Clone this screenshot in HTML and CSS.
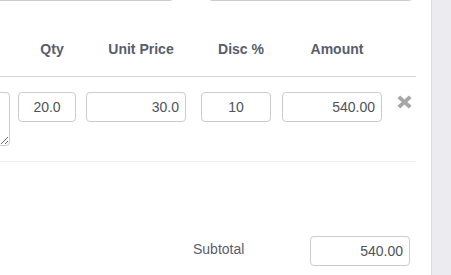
FILE: index.html
```html
<!DOCTYPE html>
<html lang="en">
<head>
    <meta charset="UTF-8">
    <title>Invoice Items</title>
    <link rel="stylesheet" href="styles.css">
</head>
<body>
    <div class="panel">
        <!-- Campos superiores (cortados) -->
        <div class="top-fields">
            <input type="text" class="field field-left">
            <input type="text" class="field field-right">
        </div>

        <!-- Cabecera de la tabla -->
        <div class="items-head">
            <div class="cell"></div>
            <div class="cell head">Qty</div>
            <div class="cell head">Unit Price</div>
            <div class="cell head">Disc %</div>
            <div class="cell head">Amount</div>
            <div class="cell"></div>
        </div>

        <!-- Fila de producto -->
        <div class="items-row">
            <div class="cell desc"><textarea class="desc-box"></textarea></div>
            <div class="cell"><input type="text" class="field num center qty" value="20.0"></div>
            <div class="cell"><input type="text" class="field num right price" value="30.0"></div>
            <div class="cell"><input type="text" class="field num center disc" value="10"></div>
            <div class="cell"><input type="text" class="field num right amount" value="540.00"></div>
            <div class="cell remove">
                <svg width="15" height="14" viewBox="0 0 15 14">
                    <path d="M0.5 3.2 L3.2 0.5 L7.5 4.6 L11.8 0.5 L14.5 3.2 L10.3 7 L14.5 10.8 L11.8 13.5 L7.5 9.4 L3.2 13.5 L0.5 10.8 L4.7 7 Z" fill="#a6a6a6"/>
                </svg>
            </div>
        </div>

        <!-- Totales -->
        <div class="totals">
            <span class="total-label">Subtotal</span>
            <input type="text" class="field num right total" value="540.00">
        </div>
    </div>
</body>
</html>
```
FILE: styles.css
```css
body {
    margin: 0;
    background-color: #ebebf0;
    font-family: 'Liberation Sans', Arial, sans-serif;
    font-size: 14px;
    overflow: hidden;
}
.panel {
    width: 431px;
    height: 275px;
    background-color: #fff;
    border-right: 1px solid #dcdce2;
    overflow: hidden;
}
.field {
    box-sizing: border-box;
    height: 30px;
    border: 1px solid #ccc;
    border-radius: 4px;
    padding: 0 6px;
    font-family: inherit;
    font-size: 14px;
    color: #505359;
    background: #fff;
    outline: none;
}
.top-fields {
    display: flex;
    height: 31px;
    margin-top: -30px;
}
.field-left {
    width: 200px;
    height: 31px;
    margin-left: -26px;
}
.field-right {
    width: 205px;
    height: 31px;
    margin-left: 34px;
}
.items-head,
.items-row {
    display: grid;
    grid-template-columns: 14px 66px 112px 88px 104px 32px;
    width: 416px;
}
.items-head {
    height: 75px;
    border-bottom: 1px solid #d4d4d4;
}
.head {
    padding-top: 38px;
    padding-left: 10px;
    line-height: 20px;
    font-weight: bold;
    color: #585d6d;
    text-align: center;
}
.items-row {
    padding: 15px 0;
    height: 54px;
    border-bottom: 1px solid #ececec;
}
.items-row .cell {
    display: flex;
    justify-content: center;
    align-items: flex-start;
}
.items-row .desc {
    justify-content: flex-end;
    padding-right: 4px;
}
.desc-box {
    box-sizing: border-box;
    flex: none;
    width: 150px;
    height: 54px;
    border: 1px solid #ccc;
    border-radius: 4px;
    resize: vertical;
    margin: 0;
}
.center { text-align: center; }
.right { text-align: right; }
.qty { width: 58px; }
.price { width: 100px; }
.disc { width: 70px; }
.amount { width: 100px; }
.items-row .remove {
    justify-content: flex-start;
    padding-left: 13px;
    padding-top: 3px;
}
.totals {
    display: flex;
    align-items: center;
    width: 410px;
    justify-content: flex-end;
    margin-top: 74px;
}
.total-label {
    width: 117px;
    margin-bottom: 5px;
    color: #585d6d;
}
.total {
    width: 100px;
}
```
